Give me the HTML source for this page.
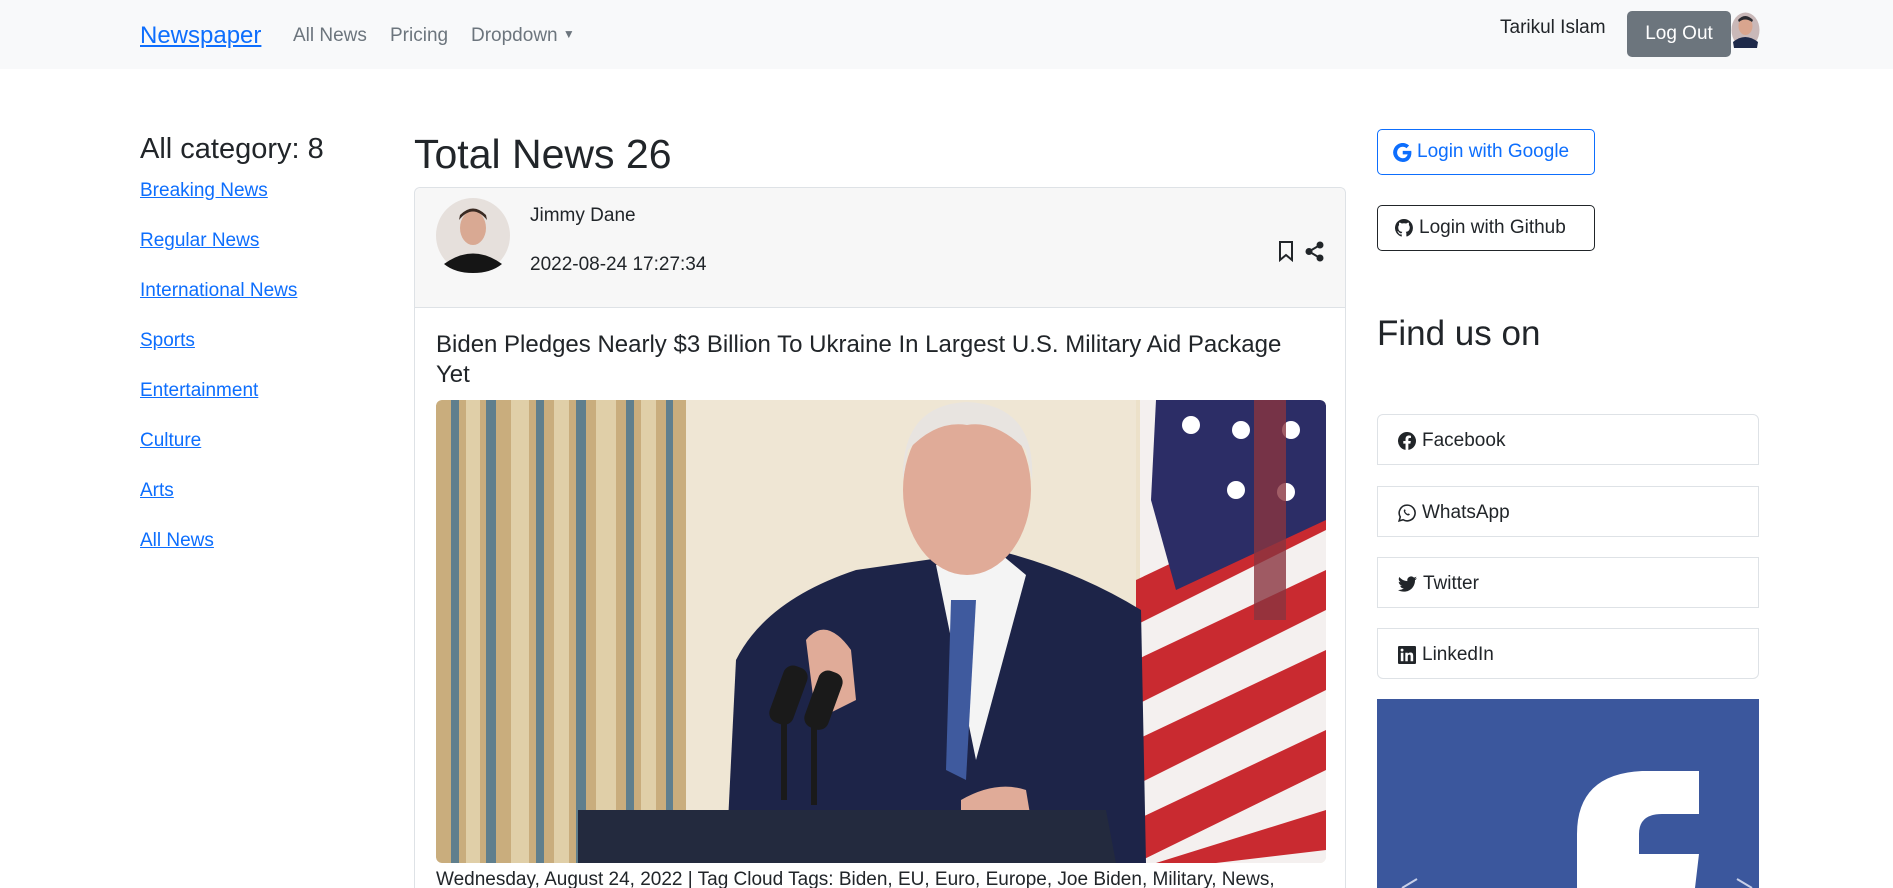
<!DOCTYPE html>
<html><head><meta charset="utf-8">
<style>
*{box-sizing:border-box;margin:0;padding:0}
html,body{width:1893px;height:888px;overflow:hidden}
body{background:#fff;font-family:"Liberation Sans",Arial,sans-serif;color:#212529;position:relative}
.nav{position:absolute;left:0;top:0;width:1893px;height:69px;background:#f8f9fa}
.a{position:absolute;white-space:nowrap}
.link{color:#0d6efd;text-decoration:underline}
.btn{position:absolute;border:1px solid;border-radius:5px;display:flex;align-items:center;font-size:19px}
.li{position:absolute;left:1377px;width:382px;border:1px solid #dee2e6;display:flex;align-items:center;padding-left:20px;font-size:19px}
.li svg{margin-right:6px}
</style></head><body>
<div class="nav"></div>
<div class="a link" style="left:140px;top:22px;font-size:24px">Newspaper</div>
<div class="a" style="left:293px;top:25px;font-size:19px;color:#6c757d">All News</div>
<div class="a" style="left:390px;top:25px;font-size:19px;color:#6c757d">Pricing</div>
<div class="a" style="left:471px;top:25px;font-size:19px;color:#6c757d">Dropdown <span style="font-size:12px;position:relative;top:-3px">▼</span></div>
<div class="a" style="left:1500px;top:17px;font-size:19px">Tarikul Islam</div>
<div class="a" style="left:1627px;top:11px;width:104px;height:46px;background:#6c757d;border-radius:5px;color:#fff;font-size:19px;display:flex;align-items:center;justify-content:center">Log Out</div>
<svg class="a" style="left:1731px;top:12px" width="29" height="36" viewBox="0 0 29 36"><ellipse cx="14.5" cy="18" rx="14" ry="17.5" fill="#c9b8b8"/><ellipse cx="14.5" cy="14" rx="7" ry="9" fill="#d9a58e"/><path d="M7 8Q14 0 22 8L21 10Q14 5 8 10Z" fill="#2a2a30"/><path d="M2 30Q14 20 27 30L26 36H3Z" fill="#1e2a4a"/></svg>

<div class="a" style="left:140px;top:133px;font-size:29px;font-weight:500">All category: 8</div>
<div class="a link" style="left:140px;top:180px;font-size:19px">Breaking News</div>
<div class="a link" style="left:140px;top:230px;font-size:19px">Regular News</div>
<div class="a link" style="left:140px;top:280px;font-size:19px">International News</div>
<div class="a link" style="left:140px;top:330px;font-size:19px">Sports</div>
<div class="a link" style="left:140px;top:380px;font-size:19px">Entertainment</div>
<div class="a link" style="left:140px;top:430px;font-size:19px">Culture</div>
<div class="a link" style="left:140px;top:480px;font-size:19px">Arts</div>
<div class="a link" style="left:140px;top:530px;font-size:19px">All News</div>

<div class="a" style="left:414px;top:131px;font-size:41px;font-weight:500">Total News 26</div>
<div class="a" style="left:414px;top:187px;width:932px;height:701px;border:1px solid #dee2e6;border-bottom:none;border-radius:6px 6px 0 0"></div>
<div class="a" style="left:415px;top:188px;width:930px;height:120px;background:#f7f7f7;border-bottom:1px solid #dee2e6;border-radius:6px 6px 0 0"></div>
<svg class="a" style="left:436px;top:198px" width="74" height="75" viewBox="0 0 74 75"><ellipse cx="37" cy="37.5" rx="37" ry="37.5" fill="#e6e0dc"/><ellipse cx="37" cy="30" rx="13" ry="17" fill="#d9a993"/><path d="M23 22Q37 5 51 22L50 17Q37 4 24 17Z" fill="#3a2a22"/><path d="M8 66Q37 45 66 66Q55 75 37 75Q19 75 8 66Z" fill="#151515"/></svg>
<div class="a" style="left:530px;top:205px;font-size:19px">Jimmy Dane</div>
<div class="a" style="left:530px;top:254px;font-size:19px">2022-08-24 17:27:34</div>
<svg class="a" style="left:1278px;top:240px" width="16" height="22" viewBox="0 0 16 22"><path d="M2 2H14V20L8 15L2 20Z" fill="none" stroke="#212529" stroke-width="2"/></svg>
<svg class="a" style="left:1305px;top:241px" width="20" height="21" viewBox="0 0 20 21"><circle cx="15" cy="4" r="3.5" fill="#212529"/><circle cx="4" cy="10.5" r="3.5" fill="#212529"/><circle cx="15" cy="17" r="3.5" fill="#212529"/><path d="M15 4L4 10.5L15 17" stroke="#212529" stroke-width="2" fill="none"/></svg>
<div class="a" style="left:436px;top:330px;width:850px;font-size:24px;font-weight:500;line-height:30px;white-space:normal">Biden Pledges Nearly $3 Billion To Ukraine In Largest U.S. Military Aid Package Yet</div>

<svg class="a" style="left:436px;top:400px;border-radius:6px" width="890" height="463" viewBox="0 0 890 463">
<defs><clipPath id="c"><rect width="890" height="463" rx="6"/></clipPath></defs>
<g clip-path="url(#c)">
<rect width="890" height="463" fill="#ece1c9"/>
<rect width="250" height="463" fill="#c9ad7d"/>
<g fill="#4e7790" opacity=".85"><rect x="15" width="8" height="463"/><rect x="50" width="10" height="463"/><rect x="100" width="8" height="463"/><rect x="140" width="10" height="463"/><rect x="190" width="8" height="463"/><rect x="230" width="7" height="463"/></g>
<g fill="#e0cfa8"><rect x="30" width="14" height="463"/><rect x="75" width="18" height="463"/><rect x="118" width="15" height="463"/><rect x="160" width="20" height="463"/><rect x="205" width="15" height="463"/></g>
<rect x="250" width="450" height="463" fill="#efe6d4"/>
<rect x="704" width="186" height="463" fill="#f4f0ef"/>
<g fill="#c92a30"><path d="M700 180L890 90V130L700 225Z"/><path d="M700 260L890 170V210L700 305Z"/><path d="M700 340L890 250V290L700 385Z"/><path d="M700 420L890 330V370L700 463Z"/><path d="M720 463L890 410V450L780 463Z"/></g>
<path d="M720 0H890V120L740 190L715 100Z" fill="#2c2d66"/>
<g fill="#fff"><circle cx="755" cy="25" r="9"/><circle cx="805" cy="30" r="9"/><circle cx="855" cy="30" r="9"/><circle cx="800" cy="90" r="9"/><circle cx="850" cy="92" r="9"/></g>
<path d="M818 0H850V220H818Z" fill="#8a3440" opacity=".8"/>
<path d="M290 463L300 260Q330 200 420 170L560 150Q640 170 705 210L710 463Z" fill="#1d2448"/>
<path d="M500 165L560 150L590 175L540 360Z" fill="#f4f4f4"/>
<path d="M515 200L540 200L530 380L510 370Z" fill="#3f5a9e"/>
<ellipse cx="531" cy="90" rx="64" ry="85" fill="#e0ab98"/>
<path d="M467 80Q465 5 531 2Q600 5 596 80L590 50Q560 20 531 25Q500 20 472 50Z" fill="#e8e4e0"/>
<path d="M370 240Q390 215 415 250L420 300L380 320Z" fill="#e0ab98"/>
<path d="M525 400Q560 380 590 390L600 450L525 455Z" fill="#e0ab98"/>
<g fill="#1a1a1a"><rect x="340" y="265" width="25" height="60" rx="10" transform="rotate(20 352 295)"/><rect x="375" y="270" width="25" height="60" rx="10" transform="rotate(20 387 300)"/><rect x="345" y="320" width="6" height="80"/><rect x="375" y="325" width="6" height="80"/></g>
<path d="M142 410L670 410L680 463H142Z" fill="#232a3e"/>
</g></svg>
<div class="a" style="left:436px;top:869px;font-size:19px">Wednesday, August 24, 2022 | Tag Cloud Tags: Biden, EU, Euro, Europe, Joe Biden, Military, News,</div>

<div class="btn" style="left:1377px;top:129px;width:218px;height:46px;border-color:#0d6efd;color:#0d6efd;padding-left:15px"><svg width="19" height="19" viewBox="0 0 16 16" style="margin-right:5px"><path d="M15.5 8.2c0-.6-.1-1.1-.1-1.6H8.2v3h4.1c-.2 1-.7 1.8-1.6 2.4v2h2.6c1.5-1.4 2.2-3.4 2.2-5.8zM8.2 16c2.2 0 4-.7 5.3-2l-2.6-2c-.7.5-1.600.8-2.700.8-2.1 0-3.9-1.4-4.5-3.3H1v2A8 8 0 008.2 16zM3.7 9.5a4.8 4.8 0 010-3V4.4H1a8 8 0 000 7.2zM8.2 3.2c1.2 0 2.2.4 3.1 1.2l2.3-2.3A8 8 0 001 4.4l2.7 2.1C4.3 4.6 6.1 3.2 8.2 3.2z" fill="#0d6efd"/></svg>Login with Google</div>
<div class="btn" style="left:1377px;top:205px;width:218px;height:46px;border-color:#212529;padding-left:17px"><svg width="18" height="18" viewBox="0 0 16 16" style="margin-right:6px"><path d="M8 0a8 8 0 00-2.5 15.6c.4 0 .5-.2.5-.4v-1.5c-2.2.5-2.7-1-2.7-1-.4-.9-.9-1.2-.9-1.2-.7-.5.1-.5.1-.5.8.1 1.2.8 1.2.8.7 1.3 1.9.9 2.3.7.1-.5.3-.9.5-1.1-1.8-.2-3.6-.9-3.6-4 0-.9.3-1.6.8-2.1-.1-.2-.4-1 .1-2.1 0 0 .7-.2 2.2.8a7.6 7.6 0 014 0c1.5-1 2.2-.8 2.2-.8.4 1.1.2 1.9.1 2.1.5.6.8 1.3.8 2.1 0 3.1-1.9 3.8-3.6 4 .3.3.6.8.6 1.5v2.2c0 .2.1.5.6.4A8 8 0 008 0z" fill="#212529"/></svg>Login with Github</div>
<div class="a" style="left:1377px;top:314px;font-size:35px;font-weight:500">Find us on</div>

<div class="li" style="top:414px;height:51px;border-radius:6px 6px 0 0;padding-top:3px"><svg width="18" height="18" viewBox="0 0 16 16"><path d="M16 8a8 8 0 10-9.3 7.9v-5.6h-2V8h2V6.2c0-2 1.2-3.1 3-3.1.9 0 1.8.2 1.8.2v2h-1c-1 0-1.3.6-1.3 1.2V8h2.2l-.4 2.3H9.2v5.6A8 8 0 0016 8z" fill="#212529"/></svg>Facebook</div>
<div class="li" style="top:486px;height:51px;padding-top:3px"><svg width="18" height="18" viewBox="0 0 16 16"><path d="M8 1a7 7 0 00-6 10.5L1 15l3.6-1A7 7 0 108 1z" fill="none" stroke="#212529" stroke-width="1.4"/><path d="M5.5 5c.5-.5 1 0 1.2.6.2.5-.5.8-.3 1.2.5.9 1.2 1.6 2.1 2 .4.2.7-.5 1.2-.3.6.3 1.1.6.6 1.2-.9 1-2.6.3-3.7-.8S4.6 6 5.5 5z" fill="#212529"/></svg>WhatsApp</div>
<div class="li" style="top:557px;height:51px;padding-top:3px"><svg width="19" height="17" viewBox="0 0 16 14"><path d="M16 1.7a6.6 6.6 0 01-1.9.5A3.3 3.3 0 0015.6.4a6.6 6.6 0 01-2.1.8A3.3 3.3 0 007.9 4.2 9.3 9.3 0 011.1.7a3.3 3.3 0 001 4.4 3.3 3.3 0 01-1.5-.4 3.3 3.3 0 002.7 3.2 3.3 3.3 0 01-1.5.1 3.3 3.3 0 003.1 2.3A6.6 6.6 0 010 11.6 9.3 9.3 0 005 13c6 0 9.3-5 9.3-9.3v-.4A6.7 6.7 0 0016 1.7z" fill="#212529"/></svg>Twitter</div>
<div class="li" style="top:628px;height:51px;border-radius:0 0 6px 6px;padding-top:3px"><svg width="18" height="18" viewBox="0 0 16 16"><rect width="16" height="16" rx="1" fill="#212529"/><rect x="2.5" y="6" width="2.3" height="7.5" fill="#fff"/><circle cx="3.6" cy="3.6" r="1.3" fill="#fff"/><path d="M6.5 6h2.2v1c.4-.7 1.2-1.2 2.3-1.2 2 0 2.5 1.2 2.5 3v4.7h-2.3V9.3c0-1-.2-1.6-1.1-1.6-1 0-1.4.7-1.4 1.6v4.2H6.5z" fill="#fff"/></svg>LinkedIn</div>

<svg class="a" style="left:1377px;top:699px" width="382" height="189" viewBox="0 0 382 189"><rect width="382" height="189" fill="#3b579d"/><path d="M200 189V135Q200 75 265 72H322V115H285Q262 115 262 135V155H322L318 189Z" fill="#fff"/><path d="M40 180L25 189M360 180L375 189" stroke="#c8d0e8" stroke-width="2"/></svg>
</body></html>
